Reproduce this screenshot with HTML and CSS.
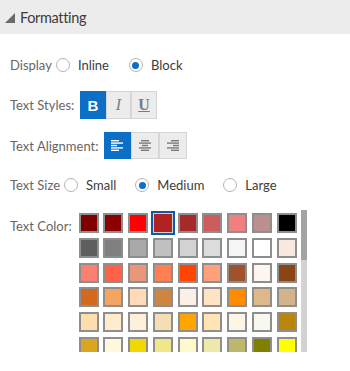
FILE: index.html
```html
<!DOCTYPE html>
<html>
<head>
<meta charset="utf-8">
<link rel="stylesheet" href="styles.css">
</head>
<body>
<div class="header">
  <svg class="tri" width="10" height="10" viewBox="0 0 10 10"><polygon points="10,0 10,10 0,10" fill="#6b6b6b"/></svg>
  <span class="title">Formatting</span>
</div>
<div class="content">
  <div class="row r-display">
    <span class="label">Display</span>
    <span class="opt"><span class="radio"></span><span class="otext">Inline</span></span>
    <span class="opt"><span class="radio on"></span><span class="otext">Block</span></span>
  </div>
  <div class="row r-styles">
    <span class="label">Text Styles:</span>
    <div class="btngroup">
      <span class="btn sbtn active b">B</span>
      <span class="btn sbtn i">I</span>
      <span class="btn sbtn u">U</span>
    </div>
  </div>
  <div class="row r-align">
    <span class="label">Text Alignment:</span>
    <div class="btngroup">
      <span class="btn abtn active">
        <svg width="12" height="11" viewBox="0 0 12 11"><g fill="#fff"><rect x="0" y="0" width="8" height="1.4"/><rect x="0" y="2.4" width="12" height="1.4"/><rect x="0" y="4.8" width="6" height="1.4"/><rect x="0" y="7.2" width="12" height="1.4"/><rect x="0" y="9.6" width="8" height="1.4"/></g></svg>
      </span>
      <span class="btn abtn">
        <svg width="12" height="11" viewBox="0 0 12 11"><g fill="#7a7a7a"><rect x="2" y="0" width="8" height="1.4"/><rect x="0" y="2.4" width="12" height="1.4"/><rect x="3" y="4.8" width="6" height="1.4"/><rect x="0" y="7.2" width="12" height="1.4"/><rect x="2" y="9.6" width="8" height="1.4"/></g></svg>
      </span>
      <span class="btn abtn">
        <svg width="12" height="11" viewBox="0 0 12 11"><g fill="#7a7a7a"><rect x="4" y="0" width="8" height="1.4"/><rect x="0" y="2.4" width="12" height="1.4"/><rect x="6" y="4.8" width="6" height="1.4"/><rect x="0" y="7.2" width="12" height="1.4"/><rect x="4" y="9.6" width="8" height="1.4"/></g></svg>
      </span>
    </div>
  </div>
  <div class="row r-size">
    <span class="label">Text Size</span>
    <span class="opt"><span class="radio"></span><span class="otext">Small</span></span>
    <span class="opt"><span class="radio on"></span><span class="otext">Medium</span></span>
    <span class="opt"><span class="radio"></span><span class="otext">Large</span></span>
  </div>
  <div class="row r-color">
    <span class="label clabel">Text Color:</span>
    <div class="palette">
      <div class="swatches">
        <span class="sw" style="background:#800000"></span>
        <span class="sw" style="background:#8b0000"></span>
        <span class="sw" style="background:#ff0000"></span>
        <span class="sw sel" style="background:#b22222"></span>
        <span class="sw" style="background:#a52a2a"></span>
        <span class="sw" style="background:#cd5c5c"></span>
        <span class="sw" style="background:#f08080"></span>
        <span class="sw" style="background:#bc8f8f"></span>
        <span class="sw" style="background:#000000"></span>

        <span class="sw" style="background:#5e5e5e"></span>
        <span class="sw" style="background:#808080"></span>
        <span class="sw" style="background:#a9a9a9"></span>
        <span class="sw" style="background:#c0c0c0"></span>
        <span class="sw" style="background:#d3d3d3"></span>
        <span class="sw" style="background:#dcdcdc"></span>
        <span class="sw" style="background:#f5f5f5"></span>
        <span class="sw" style="background:#ffffff"></span>
        <span class="sw" style="background:#f8e8e0"></span>

        <span class="sw" style="background:#fa8072"></span>
        <span class="sw" style="background:#ff6347"></span>
        <span class="sw" style="background:#e9967a"></span>
        <span class="sw" style="background:#ff7f50"></span>
        <span class="sw" style="background:#ff4500"></span>
        <span class="sw" style="background:#ffa07a"></span>
        <span class="sw" style="background:#a0522d"></span>
        <span class="sw" style="background:#fff5ee"></span>
        <span class="sw" style="background:#8b4513"></span>

        <span class="sw" style="background:#d2691e"></span>
        <span class="sw" style="background:#f4a460"></span>
        <span class="sw" style="background:#ffdab9"></span>
        <span class="sw" style="background:#cd853f"></span>
        <span class="sw" style="background:#faf0e6"></span>
        <span class="sw" style="background:#ffe4c4"></span>
        <span class="sw" style="background:#ff8c00"></span>
        <span class="sw" style="background:#deb887"></span>
        <span class="sw" style="background:#d2b48c"></span>

        <span class="sw" style="background:#ffdead"></span>
        <span class="sw" style="background:#ffebcd"></span>
        <span class="sw" style="background:#fdf0dc"></span>
        <span class="sw" style="background:#f5deb3"></span>
        <span class="sw" style="background:#ffa500"></span>
        <span class="sw" style="background:#ffe4b5"></span>
        <span class="sw" style="background:#fdf5e6"></span>
        <span class="sw" style="background:#f8f8f0"></span>
        <span class="sw" style="background:#b8860b"></span>

        <span class="sw" style="background:#daa520"></span>
        <span class="sw" style="background:#fff8dc"></span>
        <span class="sw" style="background:#f0d800"></span>
        <span class="sw" style="background:#f0e68c"></span>
        <span class="sw" style="background:#fffacd"></span>
        <span class="sw" style="background:#eee8aa"></span>
        <span class="sw" style="background:#bdb76b"></span>
        <span class="sw" style="background:#808000"></span>
        <span class="sw" style="background:#ffff00"></span>

        <span class="sw" style="background:#fffff0"></span>
        <span class="sw" style="background:#ffffe0"></span>
        <span class="sw" style="background:#fafad2"></span>
        <span class="sw" style="background:#adff2f"></span>
        <span class="sw" style="background:#7fff00"></span>
        <span class="sw" style="background:#7cfc00"></span>
        <span class="sw" style="background:#00ff00"></span>
        <span class="sw" style="background:#32cd32"></span>
        <span class="sw" style="background:#228b22"></span>
      </div>
      <div class="scrollbar"><div class="thumb"></div></div>
    </div>
  </div>
</div>
</body>
</html>
```

FILE: styles.css
```css
html, body {
  margin: 0;
  padding: 0;
  background: #fff;
}
body {
  font-family: Lato, "Noto Sans", sans-serif;
  font-size: 13px;
  color: #444;
  width: 350px;
  height: 371px;
  overflow: hidden;
}
.header {
  height: 34px;
  background: #ececec;
  display: flex;
  align-items: center;
  padding-left: 5px;
}
.tri {
  margin-top: 1px;
}
.title {
  margin-left: 5px;
  font-size: 14.5px;
  letter-spacing: -0.35px;
  color: #3c3c3c;
}
.content {
  padding: 20px 0 0 10px;
}
.row {
  display: flex;
  align-items: center;
}
.label {
  color: #666;
  white-space: nowrap;
}
.r-display { height: 22px; }
.r-styles { height: 28px; margin-top: 15px; }
.r-align { height: 27px; margin-top: 13px; }
.r-size { height: 22px; margin-top: 15px; }
.r-color { align-items: flex-start; margin-top: 14px; }

.opt {
  display: flex;
  align-items: center;
  margin-left: 4px;
  margin-right: 16px;
}
.r-size .opt { margin-left: 4px; margin-right: 15px; }
.radio {
  width: 12px;
  height: 12px;
  border: 1px solid #b4b4b4;
  border-radius: 50%;
  background: #fff;
  display: flex;
  align-items: center;
  justify-content: center;
}
.radio.on::after {
  content: "";
  width: 7px;
  height: 7px;
  border-radius: 50%;
  background: #0b6fc6;
}
.otext {
  margin-left: 8px;
  color: #3c3c3c;
}
.btngroup {
  display: flex;
  margin-left: 6px;
}
.btn {
  display: flex;
  align-items: center;
  justify-content: center;
  background: #ececec;
  border: 1px solid #d4d4d4;
  box-sizing: border-box;
  height: 28px;
}
.btn + .btn { border-left: 1px solid #d8d8d8; }
.btn.active {
  background: #0b6fc6;
  border-color: #0b6fc6;
}
.sbtn {
  width: 25.5px;
  font-family: "Liberation Serif", "DejaVu Serif", serif;
  font-size: 16px;
  color: #7a7a7a;
}
.sbtn.b { font-weight: bold; color: #fff; font-family: "Liberation Sans", sans-serif; font-size: 15px; }
.sbtn.i { font-style: italic; }
.sbtn.u { font-weight: bold; text-decoration: underline; }
.abtn {
  width: 27.7px;
  height: 27px;
}
.r-align .btngroup { margin-left: 5px; }
.clabel { margin-top: 8px; }
.palette {
  display: flex;
  margin-left: 5px;
  height: 142px;
}
.swatches {
  width: 222px;
  height: 142px;
  overflow: hidden;
  box-sizing: border-box;
  padding: 3px 0 0 2px;
  display: grid;
  grid-template-columns: repeat(9, 20px);
  grid-auto-rows: 20px;
  column-gap: 4.75px;
  row-gap: 4.8px;
  align-content: start;
}
.sw {
  box-sizing: border-box;
  width: 20px;
  height: 20px;
  border: 2px solid #8e8e8e;
}
.sw.sel {
  border: 1px solid #d0d0d0;
  box-shadow: 0 0 0 2px #0d5ba6;
}
.scrollbar {
  width: 6px;
  height: 142px;
  background: #d2d2d2;
  margin-left: 2px;
}
.thumb {
  height: 50px;
  background: #a3a3a3;
}
```
